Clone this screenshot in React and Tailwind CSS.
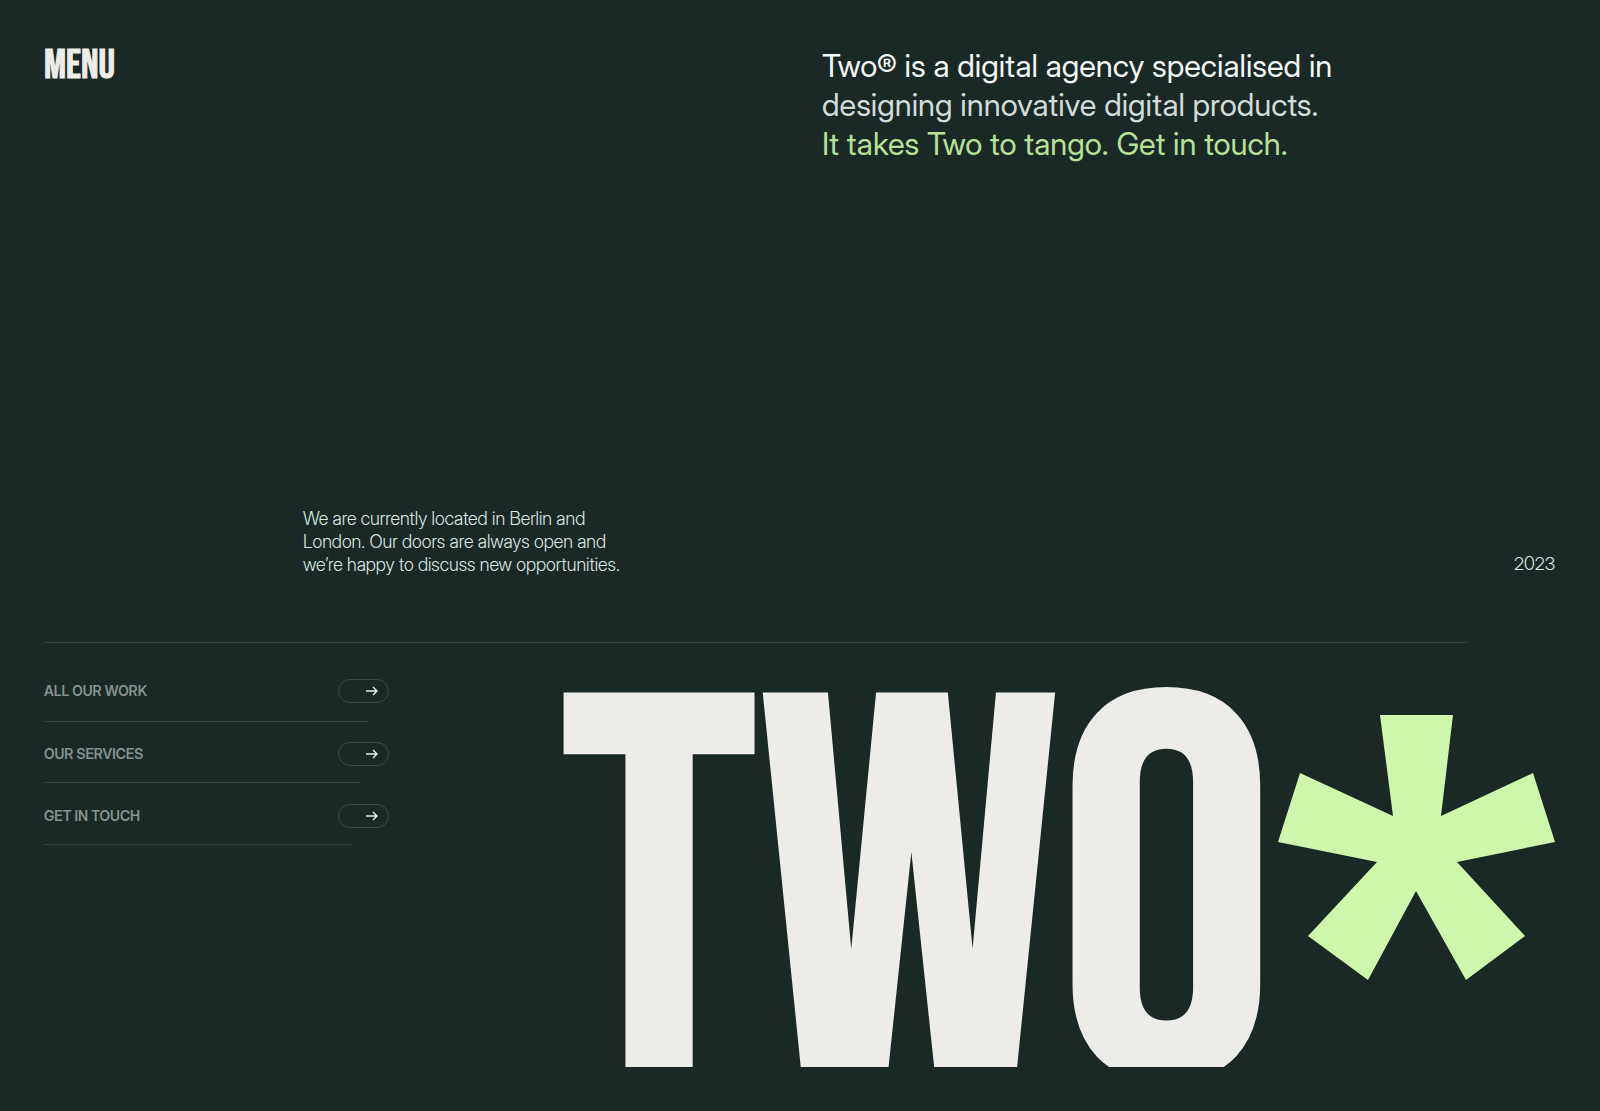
import React from "react";

const links = [
  { label: "ALL OUR WORK", href: "#work", row: "h-[79px] pt-[17px]", rule: "w-[324px]" },
  { label: "OUR SERVICES", href: "#services", row: "h-[61px] pt-1", rule: "w-[317px]" },
  { label: "GET IN TOUCH", href: "#contact", row: "h-[62px] pt-1", rule: "w-[308px]" },
];

function Arrow() {
  return (
    <svg viewBox="0 0 12 10" className="h-2.5 w-3" fill="none" stroke="currentColor" strokeWidth="1.4" aria-hidden="true">
      <path d="M0 5H11M7 1l4 4-4 4" />
    </svg>
  );
}

function Asterisk() {
  return (
    <svg viewBox="0 0 277 265" className="mt-7 h-[265px] w-[277px] shrink-0" aria-hidden="true">
      <polygon
        fill="#cdf8ac"
        points="102,0 175,0 163,101 255,58 277,127 179,147 247,221 188,265 138,176 90,265 30,221 99,147 0,127 22,58 115,101"
      />
    </svg>
  );
}

export default function App() {
  return (
    <div className="flex min-h-screen flex-col bg-[#1a2926] pr-[45px] pl-11 font-['Inter_Display',Inter,sans-serif] text-[#dce8e2]">
      <header className="grid min-h-[507px] grid-cols-[778px_1fr] pt-[46px]">
        <div>
          <button
            type="button"
            className="block font-['Bebas_Neue','Liberation_Sans',sans-serif] text-[41px] leading-10 text-[#edece8] [-webkit-text-stroke:1px_#edece8]"
          >
            MENU
          </button>
        </div>
        <p className="text-[31px] leading-[39px]">
          <span className="block text-[#f3f6f4]">Two® is a digital agency specialised in</span>
          <span className="block text-[#d3dcd9]">designing innovative digital products.</span>
          <a href="#contact" className="block text-[#b8e198]">
            It takes Two to tango. Get in touch.
          </a>
        </p>
      </header>

      <section className="flex items-end justify-between pl-[259px]">
        <p className="text-[18px] leading-[23px] font-light">
          We are currently located in Berlin and
          <br />
          London. Our doors are always open and
          <br />
          we’re happy to discuss new opportunities.
        </p>
        <p className="text-[18px] leading-[25px] font-light">2023</p>
      </section>

      <hr className="mt-[66px] mr-[88px] border-[#33433e]" />

      <main className="flex items-start justify-between">
        <nav className="w-[345px]">
          {links.map((link) => (
            <a key={link.label} href={link.href} className={`flex flex-col ${link.row}`}>
              <span className="flex flex-1 items-center justify-between">
                <span className="text-[14px] leading-5 font-semibold text-[#87938f]">
                  {link.label}
                </span>
                <span className="flex h-6 w-[51px] items-center justify-end rounded-full border border-[#3b4a46] pr-2.5 text-[#e6efea]">
                  <Arrow />
                </span>
              </span>
              <span className={`h-px bg-[#33433e] ${link.rule}`} />
            </a>
          ))}
        </nav>
        <div className="mt-11 flex items-start gap-1">
          <h1 className="h-[380px] overflow-hidden font-['Bebas_Neue','Liberation_Sans',sans-serif] text-[538px] leading-[450px] font-normal text-[#edece8] [-webkit-text-stroke:8px_#edece8]">
            TWO
          </h1>
          <Asterisk />
        </div>
      </main>
    </div>
  );
}
